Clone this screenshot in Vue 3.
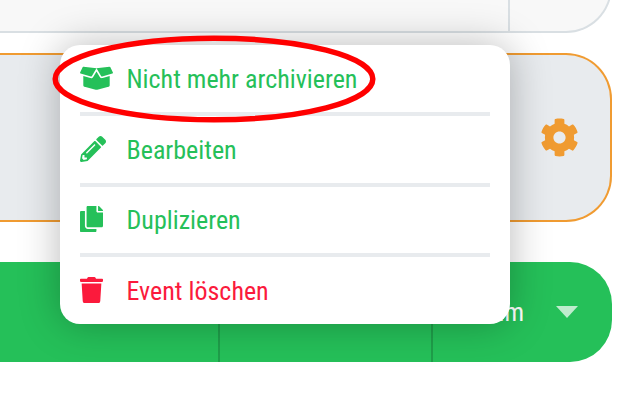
<template>
  <div class="page">
    <div class="top-card">
      <div class="top-cell"></div>
      <div class="top-cell last"></div>
    </div>

    <div class="event-card">
      <svg class="cog" viewBox="0 0 512 512">
        <path fill="currentColor" d="M487.4 315.7l-42.6-24.6c4.3-23.2 4.3-47 0-70.2l42.6-24.6c4.9-2.8 7.1-8.6 5.5-14-11.1-35.6-30-67.8-54.7-94.6-3.8-4.1-10-5.1-14.8-2.3L380.8 110c-17.9-15.4-38.5-27.3-60.8-35.1V25.8c0-5.6-3.9-10.5-9.4-11.7-36.7-8.2-74.3-7.8-109.2 0-5.5 1.2-9.4 6.1-9.4 11.7V75c-22.2 7.9-42.8 19.8-60.8 35.1L88.7 85.5c-4.9-2.8-11-1.9-14.8 2.3-24.7 26.7-43.6 58.9-54.7 94.6-1.7 5.4.6 11.2 5.5 14L67.3 221c-4.3 23.2-4.3 47 0 70.2l-42.6 24.6c-4.9 2.8-7.1 8.6-5.5 14 11.1 35.6 30 67.8 54.7 94.6 3.8 4.1 10 5.1 14.8 2.3l42.6-24.6c17.9 15.4 38.5 27.3 60.8 35.1v49.2c0 5.6 3.9 10.5 9.4 11.7 36.7 8.2 74.3 7.8 109.2 0 5.5-1.2 9.4-6.1 9.4-11.7v-49.2c22.2-7.9 42.8-19.8 60.8-35.1l42.6 24.6c4.9 2.8 11 1.9 14.8-2.3 24.7-26.7 43.6-58.9 54.7-94.6 1.5-5.5-.7-11.3-5.6-14.1zM256 336c-44.1 0-80-35.9-80-80s35.9-80 80-80 80 35.9 80 80-35.9 80-80 80z"/>
      </svg>
    </div>

    <div class="green-bar">
      <div class="green-cell first"></div>
      <div class="green-cell second"></div>
      <div class="green-cell third">
        <span class="green-label">Datum</span>
        <span class="caret"></span>
      </div>
    </div>

    <div class="menu">
      <div v-for="item in items" :key="item.label" class="menu-item" :class="{ danger: item.danger }">
        <span class="menu-icon">
          <svg :viewBox="item.viewBox" :style="{ width: item.width + 'px' }">
            <path fill="currentColor" :d="item.path"/>
          </svg>
        </span>
        <span class="menu-label">{{ item.label }}</span>
      </div>
    </div>

    <svg class="highlight" viewBox="0 0 330 92">
      <ellipse cx="165" cy="46" rx="158.8" ry="40.8" fill="none" stroke="#f00" stroke-width="5.5"/>
    </svg>
  </div>
</template>

<script setup>
const items = [
  {
    label: 'Nicht mehr archivieren',
    viewBox: '0 0 640 512',
    width: 33,
    path: 'M425.7 256c-16.9 0-32.8-9-41.4-23.4L320 126l-64.2 106.6c-8.7 14.5-24.6 23.5-41.5 23.5-4.5 0-9-.6-13.3-1.9L64 215v178c0 14.7 10 27.5 24.2 31l216.2 54.1c10.2 2.5 20.9 2.5 31 0L551.8 424c14.2-3.6 24.2-16.4 24.2-31V215l-137 39.1c-4.3 1.3-8.8 1.9-13.3 1.9zm212.6-112.2L586.8 41c-3.1-6.2-9.8-9.8-16.7-8.9L320 64l91.7 152.1c3.8 6.3 11.4 9.3 18.5 7.3l197.9-56.5c9.9-2.9 14.7-13.9 10.2-23.1zM53.2 41L1.7 143.8c-4.6 9.2.3 20.2 10.1 23l197.9 56.5c7.1 2 14.7-1 18.5-7.3L320 64 69.8 32.1c-6.9-.8-13.5 2.7-16.6 8.9z'
  },
  {
    label: 'Bearbeiten',
    viewBox: '0 0 512 512',
    width: 26,
    path: 'M497.9 142.1l-46.1 46.1c-4.7 4.7-12.3 4.7-17 0l-111-111c-4.7-4.7-4.7-12.3 0-17l46.1-46.1c18.7-18.7 49.1-18.7 67.9 0l60.1 60.1c18.8 18.7 18.8 49.1 0 67.9zM284.2 99.8L21.6 362.4.4 483.9c-2.9 16.4 11.4 30.6 27.8 27.8l121.5-21.3 262.6-262.6c4.7-4.7 4.7-12.3 0-17l-111-111c-4.8-4.7-12.4-4.7-17.1 0zM124.1 339.9c-5.5-5.5-5.5-14.3 0-19.8l154-154c5.5-5.5 14.3-5.5 19.8 0s5.5 14.3 0 19.8l-154 154c-5.5 5.5-14.3 5.5-19.8 0zM88 424h48v36.3l-64.5 11.3-31.1-31.1L51.7 376H88v48z'
  },
  {
    label: 'Duplizieren',
    viewBox: '0 0 448 512',
    width: 23,
    path: 'M320 448v40c0 13.255-10.745 24-24 24H24c-13.255 0-24-10.745-24-24V120c0-13.255 10.745-24 24-24h72v296c0 30.879 25.121 56 56 56h168zm0-344V0H152c-13.255 0-24 10.745-24 24v368c0 13.255 10.745 24 24 24h272c13.255 0 24-10.745 24-24V128H344c-13.2 0-24-10.8-24-24zm120.971-31.029L375.029 7.029A24 24 0 0 0 358.059 0H352v96h96v-6.059a24 24 0 0 0-7.029-16.97z'
  },
  {
    label: 'Event löschen',
    viewBox: '0 0 448 512',
    width: 23,
    danger: true,
    path: 'M432 32H312l-9.4-18.7A24 24 0 0 0 281.1 0H166.8a23.72 23.72 0 0 0-21.4 13.3L136 32H16A16 16 0 0 0 0 48v32a16 16 0 0 0 16 16h416a16 16 0 0 0 16-16V48a16 16 0 0 0-16-16zM53.2 467a48 48 0 0 0 47.9 45h245.8a48 48 0 0 0 47.9-45L416 128H32z'
  }
]
</script>

<style>
html, body {
  background: #fff;
  overflow: hidden;
}
</style>

<style scoped>
.page {
  position: relative;
  width: 626px;
  height: 400px;
  overflow: hidden;
  font-family: Roboto, "Liberation Sans", sans-serif;
}

.top-card {
  display: flex;
  height: 120px;
  margin: -87px 14px 0 -20px;
  background: #f8f8f8;
  border: 2px solid #d9dfe3;
  border-left: 0;
  border-radius: 0 46px 46px 0;
  box-sizing: border-box;
}

.top-cell {
  width: 530px;
  flex: none;
  border-right: 2px solid #d9dfe3;
  box-sizing: border-box;
}

.top-cell.last {
  flex: 1;
  border-right: 0;
}

.event-card {
  display: flex;
  align-items: center;
  justify-content: flex-end;
  height: 169px;
  margin: 20px 14px 0 -20px;
  padding-right: 31px;
  background: #e8ebee;
  border: 2px solid #f09b31;
  border-left: 0;
  border-radius: 0 46px 46px 0;
  box-sizing: border-box;
}

.cog {
  width: 39px;
  height: 39px;
  color: #f09b31;
}

.green-bar {
  display: flex;
  height: 100px;
  margin: 40px 14px 0 -20px;
  background: #25c059;
  border-radius: 0 42px 42px 0;
}

.green-cell {
  border-right: 2px solid #1f9e4a;
  box-sizing: border-box;
}

.green-cell.first {
  width: 240px;
}

.green-cell.second {
  width: 213px;
}

.green-cell.third {
  display: flex;
  flex: 1;
  align-items: center;
  justify-content: flex-end;
  border-right: 0;
  padding-right: 34px;
}

.green-label {
  margin-right: 32px;
  color: #fff;
  font-size: 26px;
  font-stretch: 75%;
}

.caret {
  width: 0;
  height: 0;
  border-left: 11px solid transparent;
  border-right: 11px solid transparent;
  border-top: 12px solid rgba(255, 255, 255, 0.7);
}

.menu {
  position: absolute;
  top: 45px;
  left: 60px;
  width: 450px;
  height: 279px;
  display: flex;
  flex-direction: column;
  padding: 0.5px 20px 0;
  background: #fff;
  border-radius: 20px;
  box-shadow: 0 0 40px rgba(0, 0, 0, 0.28);
  box-sizing: border-box;
}

.menu-item {
  display: flex;
  flex: none;
  height: 70.5px;
  align-items: center;
  color: #25c059;
  border-bottom: 4px solid #e8ebee;
  box-sizing: border-box;
}

.menu-item:last-child {
  border-bottom-color: transparent;
}

.menu-item.danger {
  color: #fb1a3c;
}

.menu-icon {
  display: flex;
  width: 46.5px;
  flex: none;
  margin-top: -1px;
}

.menu-label {
  padding-top: 1px;
  font-size: 26px;
  font-stretch: 75%;
  white-space: nowrap;
}

.highlight {
  position: absolute;
  top: 32.5px;
  left: 49px;
  width: 330px;
  height: 92px;
  pointer-events: none;
}
</style>
